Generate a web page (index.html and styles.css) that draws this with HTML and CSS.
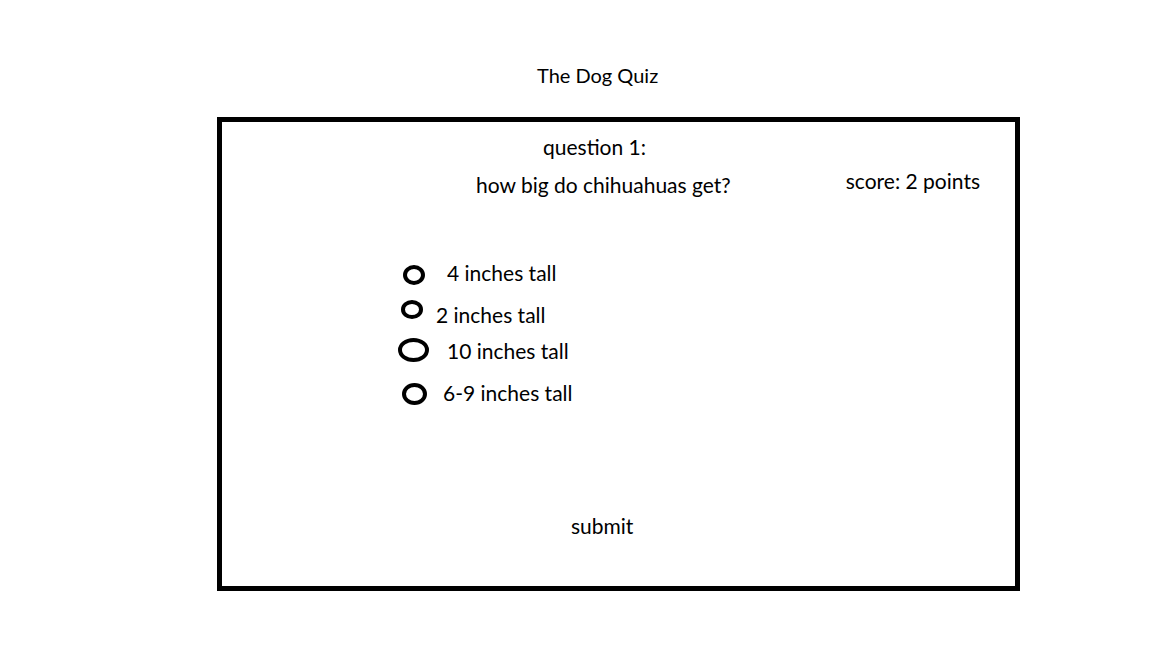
FILE: index.html
```html
<!DOCTYPE html>
<html>
<head>
<meta charset="utf-8">
<title>The Dog Quiz</title>
<link rel="stylesheet" href="styles.css">
</head>
<body>
<h1 class="title">The Dog Quiz</h1>
<div class="quiz">
  <div class="qnum">question 1:</div>
  <div class="qrow">
    <span class="qtext">how big do chihuahuas get?</span>
    <span class="score">score: 2 points</span>
  </div>
  <div class="options">
    <label class="opt opt1"><span class="ring"></span><span class="lbl">4 inches tall</span></label>
    <label class="opt opt2"><span class="ring"></span><span class="lbl">2 inches tall</span></label>
    <label class="opt opt3"><span class="ring"></span><span class="lbl">10 inches tall</span></label>
    <label class="opt opt4"><span class="ring"></span><span class="lbl">6-9 inches tall</span></label>
  </div>
  <div class="submit">submit</div>
</div>
</body>
</html>
```
FILE: styles.css
```css
html, body {
  margin: 0;
  padding: 0;
  background: #ffffff;
}
body {
  font-family: Lato, "Liberation Sans", sans-serif;
  font-size: 21px;
  line-height: 24px;
  color: #000;
  width: 1152px;
  height: 648px;
  overflow: hidden;
}
.title {
  font-size: 20px;
  font-weight: normal;
  line-height: 24px;
  margin: 63px 0 30px 537px;
}
.quiz {
  box-sizing: border-box;
  margin-left: 217px;
  width: 803px;
  height: 474px;
  border: 5px solid #000;
}
.qnum {
  margin: 13px 0 0 321px;
}
.qrow {
  display: flex;
  align-items: flex-start;
  margin-top: 10px;
  padding-right: 35px;
}
.qtext {
  margin: 4px 0 0 254px;
}
.score {
  margin-left: auto;
}
.options {
  display: flex;
  flex-direction: column;
  margin-top: 64px;
}
.opt {
  display: flex;
  align-items: flex-start;
  height: 24px;
}
.ring {
  box-sizing: border-box;
  border: 4px solid #000;
  border-radius: 50%;
  flex: none;
}
.opt1 .ring { width: 22px; height: 20px; margin: 4px 0 0 181px; }
.opt1 .lbl { margin-left: 22px; }
.opt2 { margin-top: 18px; }
.opt2 .ring { width: 22px; height: 19px; margin: -3px 0 0 179px; }
.opt2 .lbl { margin-left: 13px; }
.opt3 { margin-top: 12px; }
.opt3 .ring { width: 31px; height: 24px; margin: -1px 0 0 176px; }
.opt3 .lbl { margin-left: 18px; }
.opt4 { margin-top: 18px; }
.opt4 .ring { width: 25px; height: 22px; margin: 2px 0 0 180px; }
.opt4 .lbl { margin-left: 16px; }
.submit {
  margin: 109px 0 0 349px;
}
```
